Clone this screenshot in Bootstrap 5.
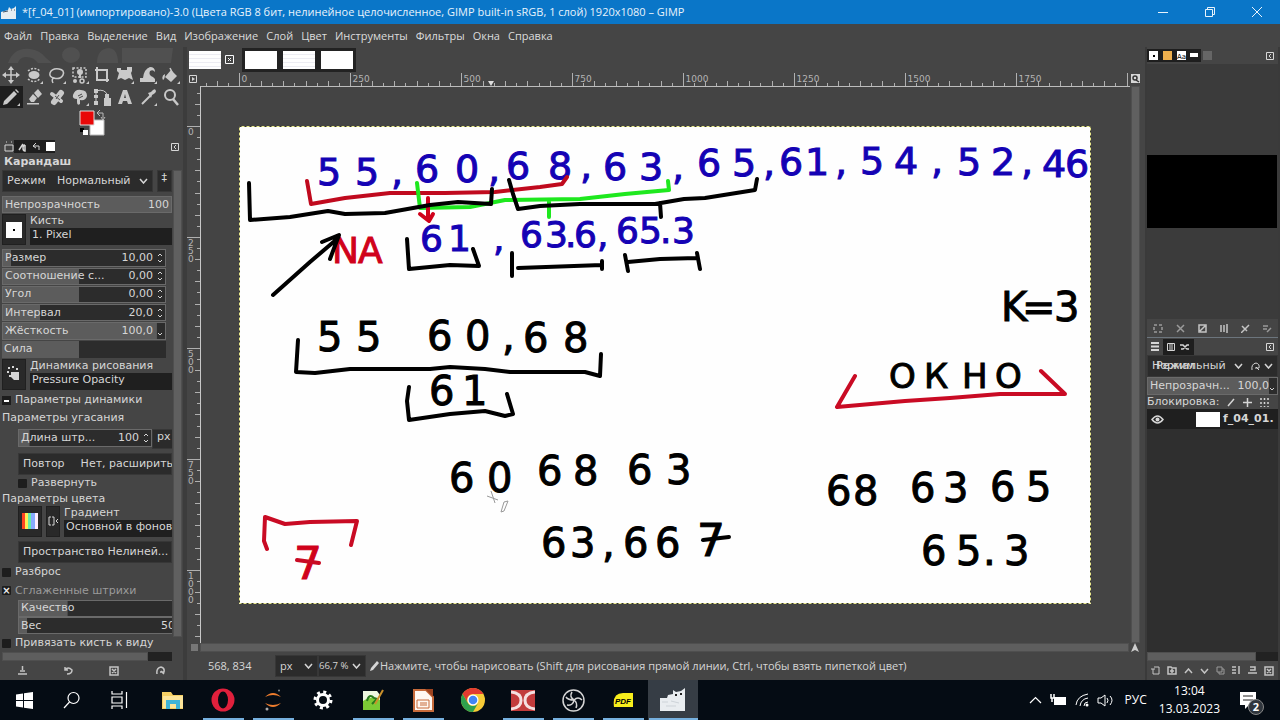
<!DOCTYPE html>
<html lang="ru">
<head>
<meta charset="utf-8">
<meta name="viewport" content="width=device-width, initial-scale=1">
<title>GIMP</title>
<link rel="stylesheet" href="https://cdn.jsdelivr.net/npm/bootstrap@5.3.0/dist/css/bootstrap.min.css">
<style>
:root{--bg:#454545;--dark:#2b2b2b;--darker:#1f1f1f;--ink:#d6d6d6;--line:#333}
body{font:11px/16px "Open Sans","Noto Sans",sans-serif;color:var(--ink);background:var(--bg)}
button,input,select{font:inherit;color:inherit;background:none;border:0;padding:0;min-width:0}
svg{display:block;flex:none}
.ic{fill:none;stroke:currentColor;stroke-width:1.5}
.ic .f{fill:currentColor;stroke:none}
.titlebar{background:#0a76c8;color:#e8f3fc;height:24px}
.titlebar button{width:47px;height:24px}
.menubar{height:23px;padding-left:4px;gap:8px}
.menubar a{color:#dcdcdc;text-decoration:none;white-space:nowrap}
.leftdock{width:187px;border-right:4px solid #3c3c3c}
.panelfont{font:11px/14px "DejaVu Sans",sans-serif}
.wilber{height:17px}
.tools{display:grid;grid-template-columns:repeat(8,1fr);width:182px}
.tools button{height:22px;display:grid;place-items:center;color:#c9c9c9}
.tools .on{background:#1e1e1e}
.colors{height:31px;padding-left:79px}
.docktabs{height:17px}
.docktabs .grp{background:#1e1e1e}
.opts{width:170px;margin-left:2px;overflow:hidden;white-space:nowrap}
.vbar{width:9px;background:#606060;margin:0 1px;border:1px solid #4f4f4f}
.box{background:var(--dark);border:1px solid #373737;height:22px;padding:0 4px}
.spin{height:18px;border:1px solid #6a6a6a;background:linear-gradient(#5c5c5c,#5c5c5c) 0 0/var(--fill,100%) 100% no-repeat #2c2c2c;padding:0 2px;width:164px;margin-bottom:1px}
.spin input{width:44px;text-align:right;margin-left:auto}
.off{color:#9a9a9a}
.thumb{width:24px;height:31px;background:#292929;border:1px solid #202020;display:grid;place-items:center}
.field{background:var(--darker);height:17px;width:100%;padding:0 2px}
.tick{appearance:none;width:9px;height:9px;background:#1d1d1d;flex:none;margin:0;border-radius:1px;color:#eee;display:grid;place-items:center}
.tick:checked::before{content:"×";font:bold 10px/8px "DejaVu Sans",sans-serif}
.hbar{height:9px;background:#222}
.hbar i{display:block;height:9px;background:#5e5e5e;border:1px solid #4f4f4f}
.foot{height:19px;color:#c4c4c4}
.imgtabs{height:25px;padding-left:2px}
.pic{width:32px;height:18px;background:#fefefe;display:block}
.doodle{background:repeating-linear-gradient(#fefefe 0 3px,#ececf2 3px 4px)}
.darktab{background:#222;padding:3px;gap:6px}
.rulers{height:14px}
.hruler text,.vruler text{font:9px "DejaVu Sans",sans-serif;fill:#b4b4b4}
.hruler line,.vruler line{stroke:#b0b0b0;stroke-width:1}
.vruler{width:13px;overflow:hidden}
.hruler{overflow:hidden;min-width:0}
.hruler,.vruler{flex-shrink:0}
.stage{background:#444;border-left:1px solid #c8c8c8;border-top:1px solid #bcbcbc;overflow:hidden;min-height:0;padding:0 39px 0 38px}
.sheet{width:100%;height:auto;max-height:100%;flex:0 1 auto}
.sheet text{font:40px "DejaVu Sans",sans-serif;fill:#000;stroke:#000;stroke-width:1}
.sheet .blue text{font-size:38px;fill:#1402b4;stroke:#1402b4}
.sheet .blue .second{font-size:36px}
.sheet .word{font-size:34px}
.sheet .red{fill:#d0021b;stroke:#d0021b;font-size:36px}
.sheet .tall{font-size:44px}
.pen{fill:none;stroke:#000;stroke-width:4;stroke-linecap:round;stroke-linejoin:round}
.rightdock{width:135px;background:#454545;border:solid #3a3a3a;border-width:0 2px;overflow:hidden}
.preview{background:#3b3b3b;min-height:0}
.black{background:#000;height:73px;width:130px}
.layers{background:#2f2f2f}
.status{height:28px;white-space:nowrap}
.taskbar{background:#050c14;height:40px;color:#fff;font-size:12px}
.taskbar .app{width:50px;height:40px;display:grid;place-items:center}
.taskbar .sys{width:48px}
.taskbar .run{background:linear-gradient(#76b0de,#76b0de) center bottom/41px 2px no-repeat}
.taskbar .now{background:linear-gradient(#76b0de,#76b0de) center bottom/49px 2px no-repeat #363d45}
.bubble{right:-8px;bottom:-6px;width:16px;height:16px;border-radius:50%;background:#30363d;border:1px solid #888;font:bold 11px/14px "Open Sans",sans-serif}
.over{left:4px}
</style>
</head>
<body class="vh-100 d-flex flex-column overflow-hidden">
<header class="titlebar d-flex align-items-center flex-shrink-0">
  <svg width="18" height="16" viewBox="0 0 18 16"><path d="M1 8l7-2 1-3 2 2 3-1 2-2v13H1z" fill="#e6edf2"/><path d="M3 8l5-1M11 6h1m2 0h1" stroke="#456" /></svg>
  <span class="ms-1 text-nowrap">*[f_04_01] (импортировано)-3.0 (Цвета RGB 8 бит, нелинейное целочисленное, GIMP built-in sRGB, 1 слой) 1920x1080 – GIMP</span>
  <div class="ms-auto d-flex">
    <button aria-label="Свернуть"><svg class="ic mx-auto" width="10" height="10"><path d="M0 5.500h10" stroke-width="1"/></svg></button>
    <button aria-label="Развернуть окно"><svg class="ic mx-auto" width="10" height="10"><path d="M.5 2.500h7v7h-7zM2.500 2v-1.500h7v7H8" stroke-width="1"/></svg></button>
    <button aria-label="Закрыть"><svg class="ic mx-auto" width="10" height="10"><path d="M0 0l10 10M10 0L0 10" stroke-width="1"/></svg></button>
  </div>
</header>
<nav class="menubar d-flex align-items-center flex-shrink-0">
  <a href="#">Файл</a><a href="#">Правка</a><a href="#">Выделение</a><a href="#">Вид</a><a href="#">Изображение</a><a href="#">Слой</a><a href="#">Цвет</a><a href="#">Инструменты</a><a href="#">Фильтры</a><a href="#">Окна</a><a href="#">Справка</a>
</nav>
<div class="d-flex flex-grow-1" style="min-height:0">
<aside class="leftdock d-flex flex-column flex-shrink-0 panelfont">
  <svg class="wilber" width="183" height="17" fill="#505050"><path d="M8 16q6-16 22-14 10 1 16 9l6 5h-14q-5-7-13-6-6 1-7 6zM62 8a8 7 0 0118 0 8 7 0 01-18 0zM97 16q0-14 12-15 9 1 9 15zM122 1h51l-2 15h-49z"/></svg>
  <div class="tools">
    <button aria-label="Перемещение"><svg class="ic" width="18" height="18" viewBox="0 0 18 18"><path d="M9 2v14M2 9h14"/><path class="f" d="M9 0l3 4H6zM9 18l3-4H6zM0 9l4-3v6zM18 9l-4-3v6z"/></svg></button>
    <button aria-label="Эллипс"><svg class="ic" width="18" height="18" viewBox="0 0 18 18"><ellipse class="f" cx="9" cy="9" rx="5.500" ry="4"/><path d="M3 5q6-5 12 0M3 13q6 5 12 0" stroke-dasharray="2 1.500"/><path class="f" d="M18 18v-3l-3 3z"/></svg></button>
    <button aria-label="Лассо"><svg class="ic" width="18" height="18" viewBox="0 0 18 18"><path d="M6 12Q1 11 2 7q2-5 9-4 6 1 4 6-3 5-9 3-3 1-1 5"/><path class="f" d="M18 18v-3l-3 3z"/></svg></button>
    <button aria-label="Выделение по цвету"><svg class="ic" width="18" height="18" viewBox="0 0 18 18"><path d="M2 2h13v9H2z" stroke-dasharray="2 1.500"/><circle class="f" cx="9" cy="6" r="3"/><circle class="f" cx="4" cy="15" r="2"/><circle cx="11" cy="15" r="2"/><path class="f" d="M8 7h2v5H8zM18 18v-3l-3 3z"/></svg></button>
    <button aria-label="Кадрирование"><svg class="ic" width="18" height="18" viewBox="0 0 18 18"><path d="M4 1v13h12M2 4h12v12" stroke-width="2"/></svg></button>
    <button aria-label="Трансформация"><svg class="ic" width="18" height="18" viewBox="0 0 18 18"><path class="f" d="M1 2h4v2h6V1h5v4l-1 2 2 7-4-2-4 2-4-2-4 2 2-7-2-2zM18 18v-3l-3 3z"/></svg></button>
    <button aria-label="Деформация"><svg class="ic" width="18" height="18" viewBox="0 0 18 18"><path class="f" d="M1 16v-4h3q1-9 7-11 5 0 5 5-2-3-5-1-2 4 3 6l2 2v3zM18 18v-3l-3 3z"/></svg></button>
    <button aria-label="Заливка"><svg class="ic" width="18" height="18" viewBox="0 0 18 18"><path class="f" d="M9 4l6 6-6 6-6-5zM3 8q-4 2-2 6 2-1 2-6zM18 18v-3l-3 3z"/><path d="M11 8L8 2"/></svg></button>
    <button class="on" aria-label="Карандаш"><svg class="ic" width="18" height="18" viewBox="0 0 18 18"><path class="f" d="M1 17l1-4L12 3l3 3L5 16zM13 2l1-1 3 3-1 1zM18 18v-3l-3 3z"/></svg></button>
    <button aria-label="Ластик"><svg class="ic" width="18" height="18" viewBox="0 0 18 18"><path class="f" d="M9 5l4-4 4 5-4 4zM8 6l4 4-3 4H6l-2-3zM2 15h12v1.500H2z"/></svg></button>
    <button aria-label="Лечащая кисть"><svg class="ic" width="18" height="18" viewBox="0 0 18 18"><path d="M6 14l7-9" stroke-width="6" stroke-linecap="round"/><path d="M4 6l9 7" stroke-width="4" stroke-linecap="round"/><path d="M7 8l5 4M8 11l3-4" stroke="#555" stroke-width="1"/></svg></button>
    <button aria-label="Палец"><svg class="ic" width="18" height="18" viewBox="0 0 18 18"><path class="f" d="M2 7q2-6 8-5 6 0 6 6-1 5-7 4v4q-3 2-3-2v-3q-5 0-4-4zM18 18v-3l-3 3z"/><path d="M7 8l4-2M8 10l4-2" stroke="#444" stroke-width="1"/></svg></button>
    <button aria-label="Контуры"><svg class="ic" width="18" height="18" viewBox="0 0 18 18"><path d="M3 2v14M3 3q9-3 12 5" stroke-width="1"/><path class="f" d="M1 1h4v4H1zM1 7h4v3H1zM1 13h4v4H1zM12 6h4v4h2v8h-7v-8h1z"/></svg></button>
    <button aria-label="Текст"><svg class="ic" width="18" height="18" viewBox="0 0 18 18"><path class="f" d="M7 2h4l5 14h-4l-1-3H7l-1 3H2zM8 10h2L9 6z" fill-rule="evenodd"/></svg></button>
    <button aria-label="Пипетка"><svg class="ic" width="18" height="18" viewBox="0 0 18 18"><path d="M3 16l9-9" stroke-width="2"/><path class="f" d="M9 5l3-1q4-5 5-1 0 2-4 4l-1 3zM18 18v-3l-3 3z"/></svg></button>
    <button aria-label="Масштаб"><svg class="ic" width="18" height="18" viewBox="0 0 18 18"><circle cx="8" cy="7" r="5" stroke-width="2"/><path d="M11 11l5 6" stroke-width="2.500"/></svg></button>
  </div>
  <div class="colors"><svg width="28" height="30" viewBox="0 0 28 30"><path d="M11 12h14v15H11z" fill="#fff" stroke="#bbb"/><path d="M1 3h14v14H1z" fill="#e80808" stroke="#ddd"/><path d="M1 20h4v4H1z"/><path d="M4 22h5v5H4z" fill="#fff"/><path d="M19 5h5v5m-3-8l-3 3 3 3m1 1l2 3 2-3" fill="none" stroke="#bbb"/></svg></div>
  <div class="docktabs d-flex align-items-center">
    <svg class="ic ms-1" width="10" height="12" viewBox="0 0 10 12" stroke="#888"><path d="M1 4h8v6H1zM2 1h1M7 1h1" stroke-width="1"/></svg>
    <div class="grp d-flex align-items-center ps-1 gap-1" style="height:13px"><svg class="ic" width="10" height="10"><path d="M1 8l4-6M7 3a2 3 0 000 6V3" /></svg><svg class="ic" width="9" height="9"><path d="M4 1L1 4l3 2M1 4h6v4" stroke-width="1"/></svg><svg width="10" height="10"><path d="M1 0h9v9H1z" fill="#fff"/></svg></div>
    <svg class="ic ms-auto me-1" width="8" height="8"><path d="M.5.5h7v7h-7zM5 2L3 4l2 2" stroke-width="1"/></svg>
  </div>
  <div class="fw-bold ps-1" style="height:15px">Карандаш</div>
  <div class="d-flex flex-grow-1" style="min-height:0">
    <form class="opts d-flex flex-column">
      <div class="d-flex gap-1"><label class="box d-flex align-items-center" style="width:160px">Режим<span class="ms-auto">Нормальный</span><svg class="ic ms-2" width="9" height="6"><path d="M1 1l3.500 4L8 1"/></svg></label><div class="box">‡</div></div>
      <label class="spin d-flex align-items-center mt-1 w-100">Непрозрачность<span class="ms-auto">100</span></label>
      <div class="d-flex gap-1 mb-1"><button type="button" class="thumb flex-shrink-0" aria-label="Кисть"><svg width="16" height="16"><path d="M0 0h16v16H0z" fill="#fff"/><path d="M7 7h2v2H7z"/></svg></button><div class="flex-grow-1"><div>Кисть</div><div class="field">1. Pixel</div></div></div>
      <label class="spin d-flex align-items-center" style="--fill:5%">Размер<input value="10,00"><svg class="ic ms-1" width="6" height="12"><path d="M1 4l2-2 2 2M1 8l2 2 2-2" stroke-width="1"/></svg></label>
      <label class="spin d-flex align-items-center" style="--fill:47%">Соотношение с...<input value="0,00" style="width:30px"><svg class="ic ms-1" width="6" height="12"><path d="M1 4l2-2 2 2M1 8l2 2 2-2" stroke-width="1"/></svg></label>
      <label class="spin d-flex align-items-center" style="--fill:47%">Угол<input value="0,00"><svg class="ic ms-1" width="6" height="12"><path d="M1 4l2-2 2 2M1 8l2 2 2-2" stroke-width="1"/></svg></label>
      <label class="spin d-flex align-items-center" style="--fill:23%">Интервал<input value="20,0"><svg class="ic ms-1" width="6" height="12"><path d="M1 4l2-2 2 2M1 8l2 2 2-2" stroke-width="1"/></svg></label>
      <label class="spin d-flex align-items-center" style="--fill:95%">Жёсткость<input value="100,0"><svg class="ic ms-1" width="6" height="12"><path d="M1 8l2 2 2-2" stroke-width="1"/></svg></label>
      <label class="spin d-flex align-items-center border-0" style="--fill:47%">Сила<input disabled aria-label="Сила"></label>
      <div class="d-flex gap-1"><button type="button" class="thumb flex-shrink-0" aria-label="Динамика"><svg class="ic" width="16" height="16"><path class="f" d="M5 6h8v8H8L5 11zM2 1h2v2H2zM6 0h2v2H6zM1 5h2v2H1zM3 9h2v2H3zM10 2h2v2h-2z"/></svg></button><div class="flex-grow-1"><div>Динамика рисования</div><div class="field">Pressure Opacity</div></div></div>
      <label class="d-flex align-items-center gap-1" style="height:22px"><svg width="9" height="9"><path d="M0 0h9v9H0z" fill="#1d1d1d"/><path d="M2 4h5v2H2z" fill="#fff"/></svg>Параметры динамики</label>
      <div>Параметры угасания</div>
      <div class="d-flex ms-3 mt-1"><label class="spin d-flex align-items-center mb-0 flex-shrink-0" style="--fill:8%;width:134px">Длина штр...<input value="100" style="width:30px"><svg class="ic ms-1" width="6" height="12"><path d="M1 4l2-2 2 2M1 8l2 2 2-2" stroke-width="1"/></svg></label><div class="box py-0" style="height:20px">px</div></div>
      <label class="box d-flex align-items-center gap-3 ms-3 mt-1 flex-shrink-0"><span>Повтор</span><span>Нет, расширить</span></label>
      <label class="d-flex align-items-center gap-1 ms-3 flex-shrink-0" style="height:17px"><input type="checkbox" class="tick">Развернуть</label>
      <div>Параметры цвета</div>
      <div class="d-flex ms-3 mb-1 gap-1"><button type="button" class="thumb flex-shrink-0" aria-label="Градиент"><svg width="16" height="16"><path d="M0 0h3v16H0z" fill="#f42"/><path d="M3 0h3v16H3z" fill="#fe5"/><path d="M6 0h3v16H6z" fill="#6ea"/><path d="M9 0h4v16H9z" fill="#8af"/><path d="M13 0h3v16h-3z" fill="#fef"/></svg></button><button type="button" class="thumb flex-shrink-0" style="width:14px" aria-label="Обратить"><svg class="ic" width="10" height="10"><path d="M3 1H1v8h2M4 1h2v8H4M10 3L8 5l2 2" stroke-width="1"/></svg></button><div class="flex-grow-1"><div>Градиент</div><div class="field">Основной в фоновы</div></div></div>
      <div class="box d-flex align-items-center ms-3 flex-shrink-0">Пространство Нелиней...</div>
      <label class="d-flex align-items-center gap-1 flex-shrink-0" style="height:19px"><input type="checkbox" class="tick">Разброс</label>
      <label class="d-flex align-items-center gap-1 off flex-shrink-0" style="height:18px"><input type="checkbox" class="tick" checked>Сглаженные штрихи</label>
      <label class="spin d-flex align-items-center ms-3 mb-0" style="--fill:30%">Качество</label>
      <label class="spin d-flex align-items-center ms-3 mb-0" style="--fill:5%">Вес<span class="ms-auto me-1">50</span></label>
      <label class="d-flex align-items-center gap-1 flex-shrink-0" style="height:18px"><input type="checkbox" class="tick">Привязать кисть к виду</label>
      <div class="hbar mt-auto"><i style="width:86%"></i></div>
    </form>
    <div class="vbar mb-4"></div>
  </div>
  <div class="foot d-flex align-items-center justify-content-around">
    <svg class="ic" width="9" height="9"><path d="M0 8h9M2 5h5M4.500 0v4" /></svg><svg class="ic" width="9" height="9"><path d="M1 1v3h3M1 4q3-4 7 0 0 4-5 4"/></svg><svg class="ic" width="10" height="10"><path d="M1 1h8v8H1zM3 3l4 4M7 3L3 7"/></svg><svg class="ic" width="9" height="9"><path d="M8 8L5 5M1 8q-1-6 4-7 4 1 3 5H4"/></svg>
  </div>
</aside>
<main class="d-flex flex-column flex-grow-1 pe-1" style="min-width:0">
  <div class="imgtabs d-flex align-items-center flex-shrink-0">
    <i class="pic doodle"></i><svg class="ic ms-1 me-2 text-light" width="9" height="9"><path d="M.5.5h8v8h-8zM3 3l3 3M6 3L3 6" stroke-width="1"/></svg>
    <div class="darktab d-flex"><i class="pic"></i><i class="pic doodle"></i><i class="pic"></i></div>
  </div>
  <div class="rulers d-flex flex-shrink-0">
    <svg class="ic" width="13" height="14" viewBox="0 0 13 14"><path d="M2.500 3.500h7v7h-7z" stroke-width="1"/><path class="f" d="M5 5l3 2-3 2z"/></svg>
    <svg class="hruler flex-grow-1" id="hr" width="300" height="14"></svg>
    <svg class="ic ms-auto" width="12" height="14" viewBox="0 0 12 14"><path class="f" d="M2 2h9v9H2z"/><circle cx="6" cy="6" r="2" stroke="#333"/><path d="M7 8l3 2" stroke="#333"/></svg>
  </div>
  <div class="d-flex flex-grow-1" style="min-height:0">
    <svg class="vruler" id="vr" height="557"></svg>
    <div class="stage flex-grow-1 d-flex justify-content-center align-items-center">
      <svg class="sheet" viewBox="239 125 852 478">
        <path d="M239 125h852v478H239z" fill="#fefefe"/>
        <path d="M239.500 125.500h851v477h-851z" fill="none" stroke="#e9e98c"/><path d="M239.500 125.500h851v477h-851z" fill="none" stroke="#333" stroke-dasharray="2 3"/>
        <g class="blue">
          <text x="317 355 391" y="184">55,</text><text x="415 455 488" y="181">60,</text><text x="506 548 580" y="178">68,</text><text x="603 639 672" y="179">63,</text><text x="697 732 763" y="175">65,</text><text x="779 805 835" y="174">61,</text><text x="860 894 931" y="173">54,</text><text x="957 991 1021" y="174">52,</text><text x="1042 1065" y="176">46</text>
          <text class="second" x="420 448 493" y="250">61,</text><text class="second" x="520 545 565 574 597" y="246">63.6,</text><text class="second" x="616 639 660 672" y="242">65.3</text>
        </g>
        <g>
          <text x="317 356" y="350">55</text><text x="427 465 502" y="349">60,</text><text x="523 563" y="351">68</text><text x="429 462" y="404">61</text>
          <text x="449 487" y="491">60</text><text x="537 573" y="484">68</text><text x="627 666" y="483">63</text>
          <text x="541 570 602 623 655" y="556">63,66</text><text class="tall" x="697" y="555">7</text>
          <text x="1001 1022 1054" y="320">K=3</text><text class="word" x="889 924 962 995" y="387">ОКНО</text>
          <text x="826 853" y="504">68</text><text x="910 943" y="501">63</text><text x="990 1026" y="500">65</text><text x="921 956 983 1004" y="564">65.3</text>
          <text class="red" x="332 358" y="262">NA</text><text class="red tall" x="294" y="578">7</text>
        </g>
        <g class="pen">
          <path d="M307 180l4 23 34-6 45-5h55l50-1 45-5 22-3 5-7" stroke="#c00a1e"/>
          <path d="M417 182l3 25 50-1 35-7 75-1 45-5 44-4-1-9M549 200v16" stroke="#1ee81e"/>
          <path d="M428 197v21M420 213l9 7 4-7" stroke="#d0021b"/>
          <path d="M249 182l1 37 40-3 38-6 17 3 40-1 45-8 28-3 33 2 1-15M509 179l4 14 5 15 22-3 40-2h75l29-5 21-1 50-8 2-11M660 202l1 14M273 294l37-33 27-23M322 241l17-7-9 24M407 238l2 30 41-4 29 1-6-17M512 252v23M518 267l84-3M602 260v8M625 254l3 16M628 261l32-3 37-1M697 252l3 16M298 339l-2 32 19 1 35-4h80l20-2 35 2 25 3h75l15 4 1-22M409 386l-2 14 2 19 41-6 35-3 20 5 8-2-6-20"/>
          <path d="M267 548l-3-8 1-24 20 7 25-2 47-1-6 24M297 559l22 3M855 375l-18 31 68-6 45-3 50-4h65l-24-23" stroke="#c90b24"/>
          <path d="M703 539l26-3"/>
        </g>
        <path d="M487 495l11 4M491 490l4 12M504 501l4-1-4 10-3 1z" fill="none" stroke="#999"/>
      </svg>
    </div>
    <div class="vbar"></div>
  </div>
  <div class="d-flex align-items-center flex-shrink-0 ps-1"><svg width="9" height="9"><path d="M0 1h7v7H0z" fill="#777"/></svg><div class="hbar flex-grow-1"><i></i></div><svg width="12" height="9"><path d="M6 0l4 9-4-2-4 2z" fill="#ccc"/></svg></div>
  <div class="status d-flex align-items-center flex-shrink-0">
    <span style="width:88px;padding-left:21px">568, 834</span>
    <label class="box d-flex align-items-center justify-content-between" style="width:43px">px<svg class="ic" width="9" height="6"><path d="M1 1l3.500 4L8 1"/></svg></label>
    <label class="box d-flex align-items-center justify-content-between px-0 pe-1" style="width:48px"><small>66,7 %</small><svg class="ic" width="9" height="6"><path d="M1 1l3.500 4L8 1"/></svg></label>
    <svg class="ic ms-1" width="10" height="12"><path class="f" d="M0 11l1-3 6-7 2 2-6 7z"/></svg>
    <span>Нажмите, чтобы нарисовать (Shift для рисования прямой линии, Ctrl, чтобы взять пипеткой цвет)</span>
  </div>
</main>
<aside class="rightdock d-flex flex-column flex-shrink-0 panelfont">
  <div class="docktabs d-flex align-items-center gap-1">
    <svg width="66" height="13" viewBox="0 0 66 13"><path d="M0 0h54v13H0z" fill="#1e1e1e"/><path d="M2 2h9v9H2zM30 2h9v9h-9zM43 4h8v4h-8z" fill="#fff"/><path d="M16 2h9v9h-9z" fill="#eeb04e"/><path d="M6 6h2v2H6z"/><path d="M56 2h9v9h-9z" fill="#666"/><text x="30" y="10" font-size="7">Aa</text></svg>
    <svg class="ic ms-auto me-1" width="8" height="8"><path d="M.5.5h7v7h-7zM5 2L3 4l2 2" stroke-width="1"/></svg>
  </div>
  <div class="preview d-flex align-items-center" style="height:255px"><div class="black"></div></div>
  <div class="foot d-flex align-items-center justify-content-around border-bottom border-secondary">
    <svg class="ic off" width="10" height="9"><path d="M1 1h8v7H1z" stroke-dasharray="3 2"/></svg><svg class="ic off" width="9" height="9"><path d="M1 1l7 7M8 1L1 8"/></svg><svg class="ic" width="9" height="9"><path d="M1 1h7v7H1zM2 7l5-5"/></svg><svg class="ic" width="9" height="9"><path d="M2 1v7M5 1v7M8 0v9"/></svg><svg class="ic" width="9" height="9"><path d="M0 9l8-8M1 2l5 5"/></svg><svg class="ic off" width="9" height="9"><path d="M0 2h5M0 5h4M4 8l4-4"/></svg>
  </div>
  <div class="docktabs d-flex align-items-center ps-1 gap-1">
    <svg class="ic" width="8" height="10"><path d="M0 1h8M0 4.500h8M0 8h8" stroke-width="2"/></svg><div class="grp d-flex gap-1 p-1"><svg class="ic" width="9" height="8"><path d="M.5.5h7v7h-7zM3 1v6M5 1v6" stroke-width="1"/></svg><svg class="ic" width="10" height="8"><path d="M0 2h3l4 4h2M9 2H7L3 6H1"/></svg></div>
    <svg class="ic ms-auto me-1" width="8" height="8"><path d="M.5.5h7v7h-7zM5 2L3 4l2 2" stroke-width="1"/></svg>
  </div>
  <div class="box d-flex align-items-center"><span class="position-relative">Нормальный<span class="position-absolute over">Режим</span></span><svg class="ic ms-2" width="9" height="6"><path d="M1 1l3.500 4L8 1"/></svg><svg class="ic ms-auto" width="9" height="9"><path d="M8 8L5 5M1 8q-1-6 4-7 4 1 3 5H4" stroke-width="1"/></svg><svg class="ic ms-1" width="9" height="6"><path d="M1 1l3.500 4L8 1"/></svg></div>
  <label class="spin d-flex align-items-center mb-0 w-100" style="--fill:94%">Непрозрачн...<input value="100,0" style="width:38px"><svg class="ic" width="6" height="12"><path d="M1 8l2 2 2-2" stroke-width="1"/></svg></label>
  <div class="d-flex align-items-center gap-1 py-px">Блокировка:<svg class="ic mx-1" width="8" height="9"><path d="M1 8l6-7"/></svg><svg class="ic me-1" width="9" height="9"><path d="M4.500 0v9M0 4.500h9"/></svg><svg class="ic" width="9" height="9"><path d="M1 0v9M4.500 0v9M8 0v9" stroke-dasharray="2 2"/></svg></div>
  <div class="layers flex-grow-1"><div class="d-flex align-items-center fw-bold" style="background:#1f1f1f;height:20px"><svg class="ic ms-1" width="13" height="9" viewBox="0 0 13 9"><path d="M1 4.500q5.500-7 11 0-5.500 7-11 0z"/><circle class="f" cx="6.500" cy="4.500" r="2"/></svg><i class="pic flex-shrink-0" style="width:24px;height:15px;margin-left:32px;margin-right:3px"></i>f_04_01.</div></div>
  <div class="hbar"><i style="width:83%"></i></div>
  <div class="foot d-flex align-items-center justify-content-around">
    <svg class="ic" width="9" height="9"><path d="M3 1h5v7H2V3M0 3h4" stroke-width="1"/></svg><svg class="ic" width="10" height="9"><path d="M1 1h3l1 1h4v6H1zM3 5h4M5 3v4"/></svg><svg class="ic" width="9" height="6"><path d="M1 5l3.500-4L8 5"/></svg><svg class="ic" width="9" height="6"><path d="M1 1l3.500 4L8 1"/></svg><svg class="ic off" width="9" height="9"><path d="M1 1h5v5H1zM3 6v2h5V3H6" stroke-width="1"/></svg><svg class="ic" width="9" height="9"><path d="M0 1h4M0 4h4M0 7h4M7 0v8"/></svg><svg class="ic" width="9" height="9"><path d="M2 1h5v3H2M0 7h9"/></svg><svg class="ic" width="10" height="10"><path d="M1 1h8v8H1zM3 3l4 4M7 3L3 7"/></svg>
  </div>
</aside>
</div>
<footer class="taskbar d-flex align-items-center flex-shrink-0">
  <button class="app sys" aria-label="Пуск"><svg width="17" height="17" fill="#fff"><path d="M0 2.500l7-1V8H0zM8 1.300L17 0v8H8zM0 9h7v6.500l-7-1zM8 9h9v8l-9-1.300z"/></svg></button>
  <button class="app sys" aria-label="Поиск"><svg class="ic" width="18" height="18"><circle cx="10.500" cy="7" r="5.500" stroke-width="1.200"/><path d="M6.500 11L1 17" stroke-width="1.200"/></svg></button>
  <button class="app sys me-1" aria-label="Представление задач"><svg class="ic" width="18" height="18"><path d="M1 0v3h10V0M1 6h10v6H1zM1 18v-3h10v3M15.500 1v16" stroke-width="1.200"/></svg></button>
  <button class="app" aria-label="Проводник"><svg width="22" height="20"><path d="M0 2h9l2 3h10v14H0z" fill="#f5cf63"/><path d="M1 6h20v12H1z" fill="#fde59a"/><path d="M4 19v-9h14v9h-4v-5H8v5z" fill="#3fb4d8"/></svg></button>
  <button class="app run" aria-label="Opera"><svg width="24" height="24"><ellipse cx="12" cy="12" rx="11.500" ry="11.500" fill="#e0203c"/><ellipse cx="12" cy="12" rx="5" ry="8.500" fill="#050c14"/></svg></button>
  <button class="app run" aria-label="Jupyter"><svg width="18" height="22"><path d="M1 8q8-8 16 0-8-4-16 0zM1 14q8 8 16 0-8 4-16 0z" fill="#ef7d2d"/><circle cx="3" cy="20" r="1.500" fill="#aaa"/><circle cx="15" cy="1.500" r="1" fill="#888"/></svg></button>
  <button class="app" aria-label="Параметры"><svg width="20" height="20" fill="none" stroke="#fff"><circle cx="10" cy="10" r="5.500" stroke-width="3"/><circle cx="10" cy="10" r="8" stroke-width="3" stroke-dasharray="3 3.280"/></svg></button>
  <button class="app run" aria-label="Notepad++"><svg width="22" height="22"><path d="M1 2h14l3 4v15H1z" fill="#eef8df"/><path d="M1 12q8-6 17-1v10H1z" fill="#7ccb35"/><path d="M5 12q2-8 7-3l3 1-5 5" fill="none" stroke="#287a1c" stroke-width="2"/><path d="M21 1l-8 14" stroke="#ca902b" stroke-width="2"/></svg></button>
  <button class="app run" aria-label="Impress"><svg width="21" height="23"><path d="M1 1h12l7 7v14H1z" fill="#fff8f2" stroke="#c76b3b" stroke-width="2"/><path d="M12 0h8v8z" fill="#9d4420"/><path d="M4 11h12v8H4zM7 14h7M7 16h7" fill="none" stroke="#c76b3b"/></svg></button>
  <button class="app" aria-label="Chrome"><svg width="24" height="24" viewBox="0 0 24 24"><circle cx="12" cy="12" r="12" fill="#f7cb36"/><path d="M1.600 6A12 12 0 0122.400 6H12a6 6 0 00-5.200 9z" fill="#e23b30"/><path d="M1.600 6A12 12 0 0012 24l5.200-9A6 6 0 016.800 15z" fill="#2fa04d"/><circle cx="12" cy="12" r="5.500" fill="#fff"/><circle cx="12" cy="12" r="4.300" fill="#4285f4"/></svg></button>
  <button class="app run" aria-label="DC"><svg width="24" height="21"><path d="M0 0h24v21H0z" fill="#c23b3b"/><path d="M0 2q10 1 10 8.500T0 19M24 2q-10 1-10 8.500T24 19" fill="none" stroke="#f5dede" stroke-width="3"/></svg></button>
  <button class="app run" aria-label="OBS"><svg width="23" height="23" fill="none" stroke="#d5d5d5"><circle cx="11.500" cy="11.500" r="10.500" stroke-width="1.500"/><path d="M10 3q-3 5 2 8 4-4 8 0M12 11q-1 6-7 5M12 11q-6 0-8-3M12 11q4 3 2 8" stroke-width="1.500"/></svg></button>
  <button class="app run" aria-label="PDF"><svg width="21" height="16"><path d="M1 15q-2-14 9-14h10v14z" fill="#f8ee1c"/><text x="2" y="12" font-family="Liberation Sans,sans-serif" font-size="8" font-weight="bold" font-style="italic">PDF</text></svg></button>
  <button class="app now" aria-label="GIMP"><svg width="26" height="24"><path d="M0 10h7l1-3 5-1V2l3 2 5-1 4-3v23H0z" fill="#e9edf0"/><path d="M2 14h6M11 13l8 2M6 18h10" stroke="#cdd3d8"/><path d="M15 7h2M20 6h2" stroke="#222" stroke-width="2"/></svg></button>
  <div class="ms-auto d-flex align-items-center gap-2 pe-4">
    <svg class="ic" width="13" height="8"><path d="M1 7l5.500-5.500L12 7" stroke-width="1.200"/></svg>
    <svg class="ic" width="17" height="12"><path class="f" d="M4 3h12v8H4z"/><path d="M1 0v4h3V0M2 4v4"/></svg>
    <svg class="ic" width="14" height="14"><path d="M1 12Q2 3 13 1M5 13q1-7 8-8M9 13q0-4 4-4" stroke-width="1"/><circle class="f" cx="12" cy="12" r="1.500"/></svg>
    <svg class="ic" width="16" height="13"><path d="M1 4h3l4-3v11L4 9H1zM10 4q2 2 0 5M13 2q4 4 0 9" stroke-width="1"/></svg>
    <span class="ms-1">РУС</span>
    <div class="text-center ms-1 me-1" style="line-height:18px">13:04<br>13.03.2023</div>
    <span class="position-relative ms-2"><svg width="16" height="17"><path d="M0 0h16v13H9l-4 4v-4H0z" fill="#fff"/><path d="M3 4h10M3 8h10" stroke="#222"/></svg><span class="position-absolute bubble text-center">2</span></span>
  </div>
</footer>
<script src="https://cdn.jsdelivr.net/npm/bootstrap@5.3.0/dist/js/bootstrap.bundle.min.js"></script>
<script>
// Ruler ticks are spaced every 25 image pixels; each 250 gets a label.
function drawRulers(){
  const sheet=document.querySelector('.sheet').getBoundingClientRect(), s=sheet.width/1920;
  const h=document.getElementById('hr'), v=document.getElementById('vr');
  const hb=h.getBoundingClientRect(), vb=v.getBoundingClientRect();
  let a='',b='';
  for(let u=-75;u<=2000;u+=25){
    const x=Math.round(sheet.left-hb.left+u*s)+.5, big=u%250===0, len=big?13:u%50===0?5:3;
    if(x>hb.width) break;
    a+=`<line x1="${x}" x2="${x}" y1="${14-len}" y2="14"/>`;
    if(big&&x+20<hb.width) a+=`<text x="${x+2}" y="10">${u}</text>`;
  }
  for(let u=-75;u<1175;u+=25){
    const y=Math.round(sheet.top-vb.top+u*s)+.5, big=u%250===0, len=big?13:u%50===0?5:3;
    b+=`<line x1="${13-len}" x2="13" y1="${y}" y2="${y}"/>`;
    if(big) [...String(u)].forEach((c,i)=>b+=`<text x="1" y="${y+8+i*8}">${c}</text>`);
  }
  h.innerHTML=a+'<path d="M288 9h6l-3 5z" fill="#ddd"/>'; v.innerHTML=b;
}
addEventListener('load',drawRulers);addEventListener('resize',drawRulers);
</script>
</body>
</html>
